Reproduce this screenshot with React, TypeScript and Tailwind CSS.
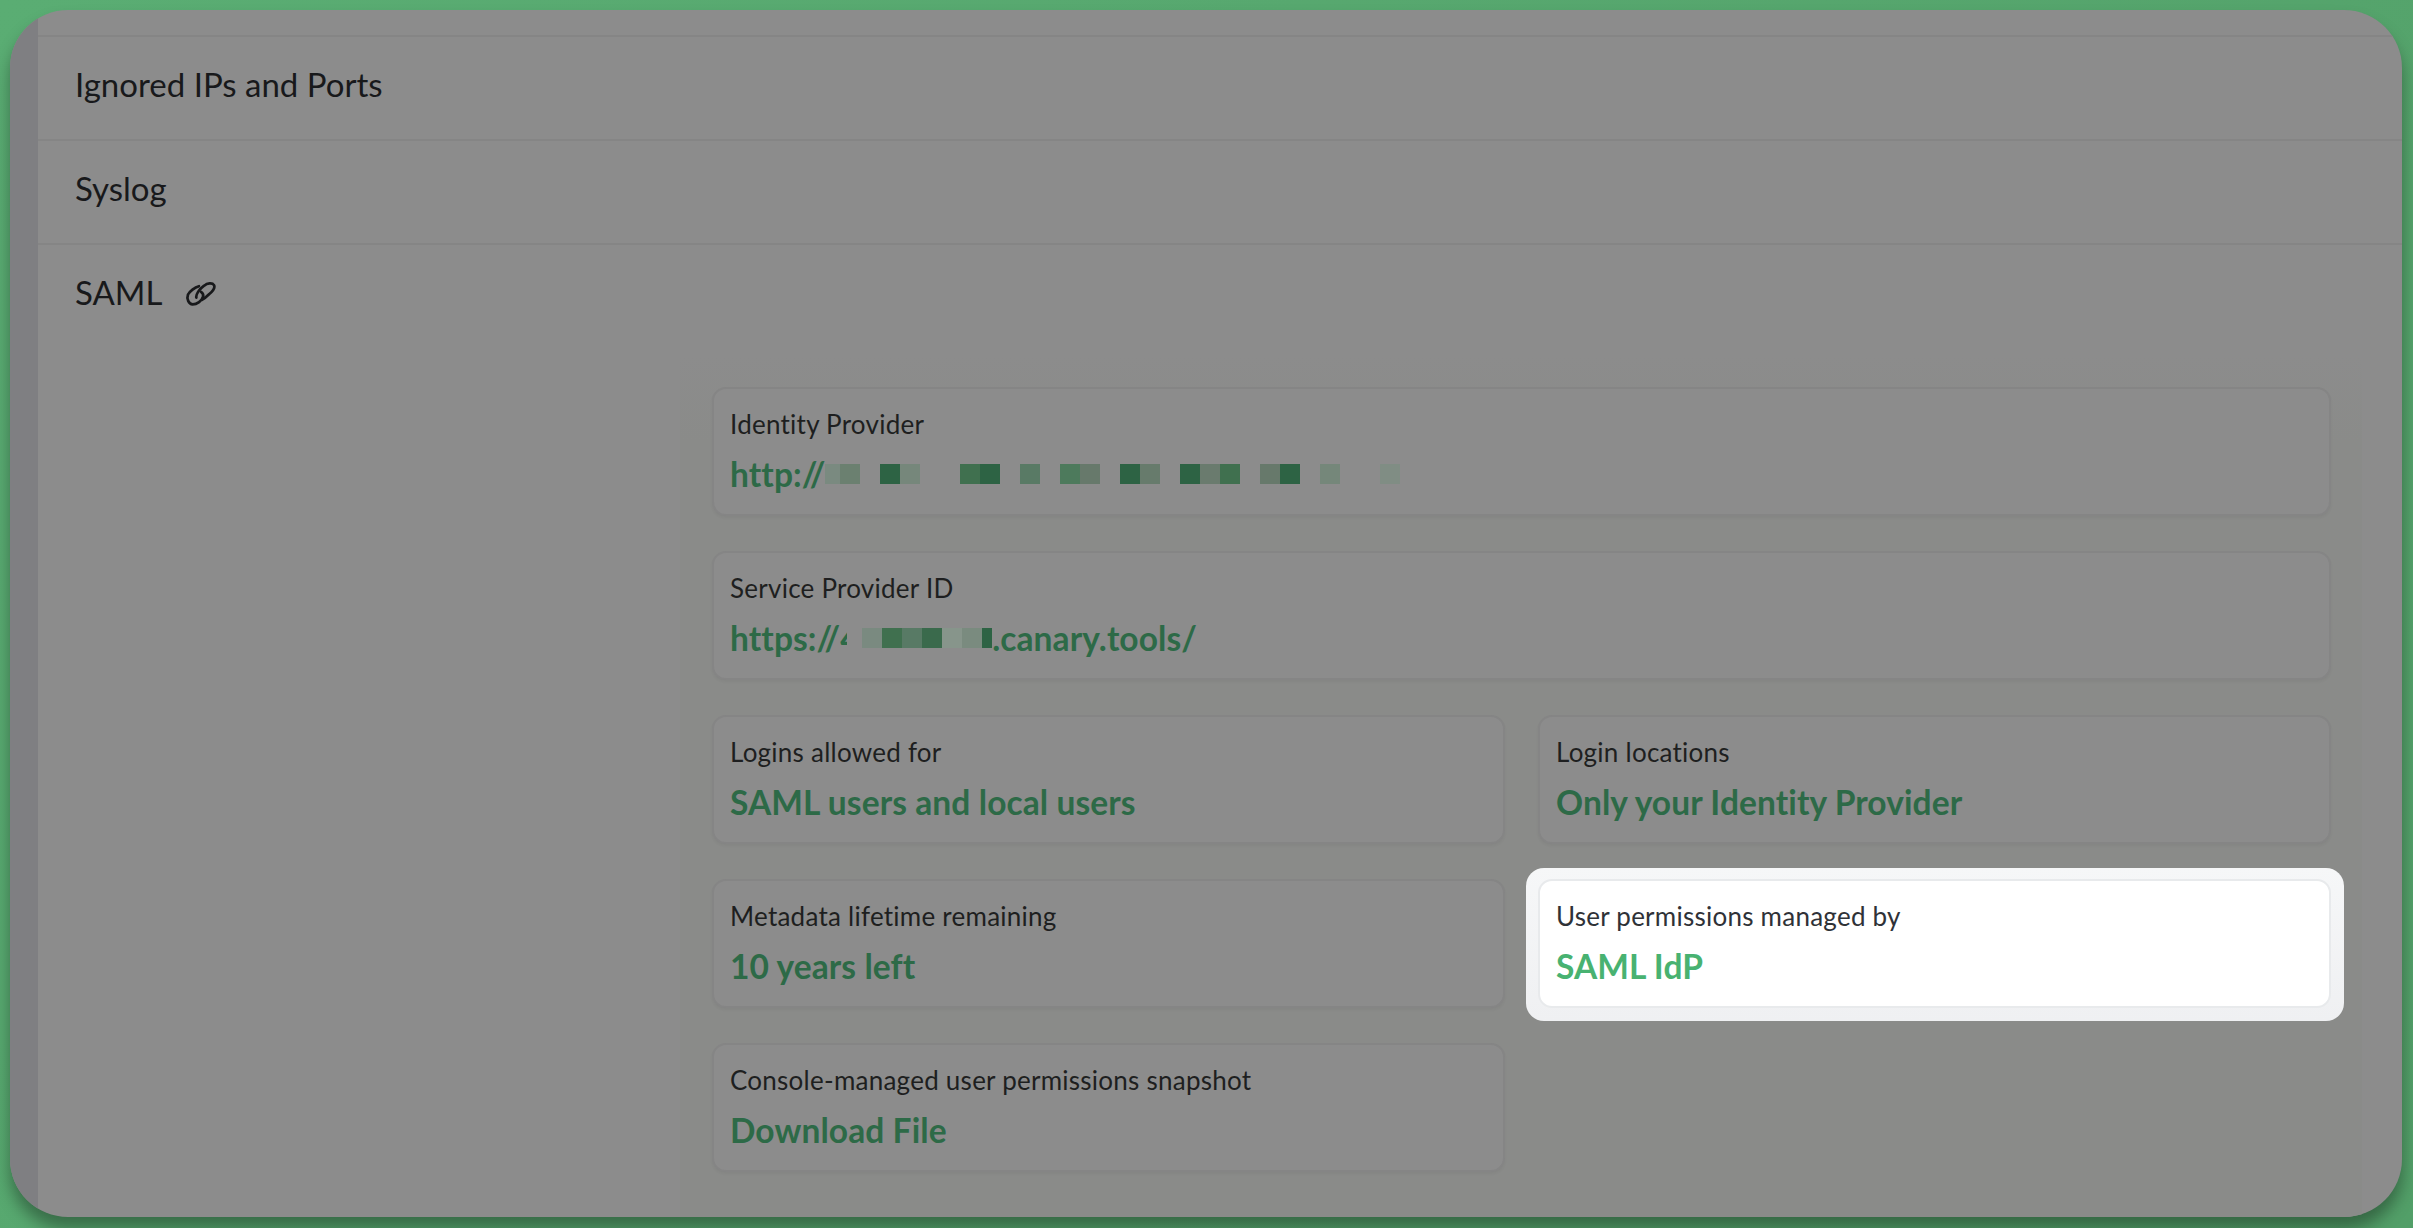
const blocksOne = [
  "w-[15px] bg-[#7a8a80]",
  "w-[20px] bg-[#6b8070]",
  "w-[20px]",
  "w-[20px] bg-[#2d6344]",
  "w-[20px] bg-[#76877b]",
  "w-[40px]",
  "w-[20px] bg-[#40704f]",
  "w-[20px] bg-[#2d6344]",
  "w-[20px]",
  "w-[20px] bg-[#597a65]",
  "w-[20px]",
  "w-[20px] bg-[#4d7a5c]",
  "w-[20px] bg-[#67796b]",
  "w-[20px]",
  "w-[20px] bg-[#2d6344]",
  "w-[20px] bg-[#677b6c]",
  "w-[20px]",
  "w-[20px] bg-[#2d6344]",
  "w-[20px] bg-[#6a7b6e]",
  "w-[20px] bg-[#40704f]",
  "w-[20px]",
  "w-[20px] bg-[#67796b]",
  "w-[20px] bg-[#2d6344]",
  "w-[20px]",
  "w-[20px] bg-[#75877a]",
  "w-[40px]",
  "w-[20px] bg-[#808d84]",
];

const blocksTwo = [
  "w-[20px] bg-[#7a8a80]",
  "w-[20px] bg-[#40704f]",
  "w-[20px] bg-[#587a65]",
  "w-[20px] bg-[#3a6a4c]",
  "w-[20px] bg-[#87958b]",
  "w-[20px] bg-[#7a8b7f]",
  "w-[10px] bg-[#2d6344]",
];

function Blocks({ items }: { items: string[] }) {
  return (
    <span className="flex h-[20px]">
      {items.map((c, i) => (
        <span key={i} className={"h-[20px] " + c} />
      ))}
    </span>
  );
}

function Row({ title, icon }: { title: string; icon?: boolean }) {
  return (
    <div className="h-[104px] shrink-0 border-t-2 border-[#858585] flex items-center gap-[23px] pl-[37px] pb-[6px] text-[33px] text-[#18191b]">
      <span>{title}</span>
      {icon && (
        <svg width="32" height="26" viewBox="0 0 30 25" fill="none" stroke="#18191b" strokeWidth="2.6" strokeLinecap="round" className="mt-[1px]">
          <path d="M13 5C9 6 4 10 2.5 13C1 17 3 22 7 22.5C11 22.5 16 19 17 15C17.5 13 16.5 11.5 15 10.5" />
          <path d="M10.5 16C10 13 13 8 18 4.5C21 2 26 1.5 27.5 4C29 7 26 10 23 12.5C21 14.5 18 17 16 18" />
        </svg>
      )}
    </div>
  );
}

function Card({ label, value, children, className }: { label: string; value?: string; children?: React.ReactNode; className?: string }) {
  return (
    <div className={"h-[129px] rounded-[14px] border-2 border-[#858585] bg-[#8c8c8c] pl-[16px] pt-[18px] shadow-[0_2px_3px_rgba(0,0,0,0.04)] " + (className ?? "")}>
      <div className="text-[26px] tracking-[0.25px] leading-[34px] text-[#1e1f20]">{label}</div>
      <div className="mt-[15px] flex items-center text-[33.5px] tracking-[0.1px] leading-[36px] font-bold text-[#2d6a47]">
        {value}
        {children}
      </div>
    </div>
  );
}

export default function App() {
  return (
    <div className="h-screen w-full overflow-hidden bg-[linear-gradient(135deg,#5aad73,#529f68)] pt-[10px] pl-[10px] pr-[11px] font-['Lato',sans-serif]">
      <div className="flex h-[1207px] overflow-hidden rounded-[58px] bg-[#8c8c8c] shadow-[0_12px_16px_rgba(0,0,0,0.35)]">
        <div className="w-[28px] shrink-0 bg-[#7f7f82]" />
        <div className="flex flex-1 flex-col pt-[25px]">
          <Row title="Ignored IPs and Ports" />
          <Row title="Syslog" />
          <Row title="SAML" icon />
          <div className="ml-[642px] mr-[40px] mt-[8px] flex-1 bg-[linear-gradient(180deg,#8c8c8c,#8a8b89_10%)] pl-[32px] pr-[31px] pt-[32px]">
            <div className="flex flex-col gap-[35px]">
              <Card label="Identity Provider">
                <span>http://</span>
                <Blocks items={blocksOne} />
              </Card>
              <Card label="Service Provider ID">
                <span>https://</span>
                <span className="w-[7px] overflow-hidden">4</span>
                <span className="w-[15px]" />
                <Blocks items={blocksTwo} />
                <span>.canary.tools/</span>
              </Card>
              <div className="grid grid-cols-2 gap-x-[33px] gap-y-[35px]">
                <Card label="Logins allowed for" value="SAML users and local users" />
                <Card label="Login locations" value="Only your Identity Provider" />
                <Card label="Metadata lifetime remaining" value="10 years left" />
                <div className="relative">
                  <div className="absolute -top-[11px] -bottom-[13px] -left-[12px] -right-[13px] rounded-[18px] bg-[linear-gradient(180deg,#f6f7f8,#eff0f2)]" />
                  <div className="relative h-[129px] rounded-[14px] border-2 border-[#e8eaec] bg-white pl-[16px] pt-[18px]">
                    <div className="text-[26px] tracking-[0.25px] leading-[34px] text-[#2f3237]">User permissions managed by</div>
                    <div className="mt-[15px] text-[33.5px] tracking-[0.1px] leading-[36px] font-bold text-[#48b271]">SAML IdP</div>
                  </div>
                </div>
                <Card label="Console-managed user permissions snapshot" value="Download File" />
              </div>
            </div>
          </div>
        </div>
      </div>
    </div>
  );
}
